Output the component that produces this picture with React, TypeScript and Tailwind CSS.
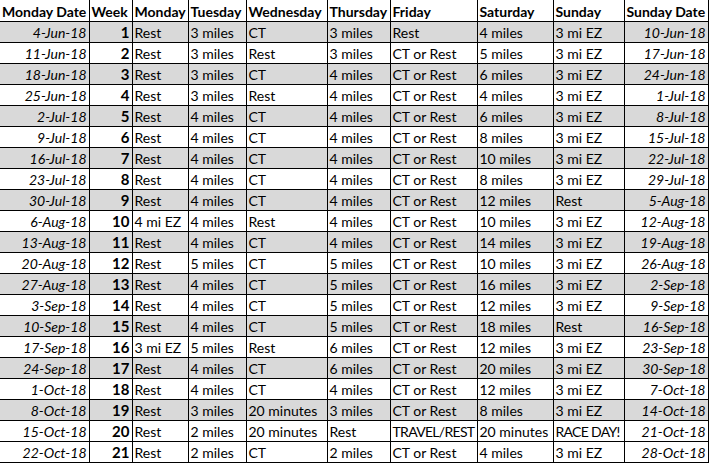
const rows: [string, number, string, string, string, string, string, string, string, string][] = [
  ['4-Jun-18', 1, 'Rest', '3 miles', 'CT', '3 miles', 'Rest', '4 miles', '3 mi EZ', '10-Jun-18'],
  ['11-Jun-18', 2, 'Rest', '3 miles', 'Rest', '3 miles', 'CT or Rest', '5 miles', '3 mi EZ', '17-Jun-18'],
  ['18-Jun-18', 3, 'Rest', '3 miles', 'CT', '4 miles', 'CT or Rest', '6 miles', '3 mi EZ', '24-Jun-18'],
  ['25-Jun-18', 4, 'Rest', '3 miles', 'Rest', '4 miles', 'CT or Rest', '4 miles', '3 mi EZ', '1-Jul-18'],
  ['2-Jul-18', 5, 'Rest', '4 miles', 'CT', '4 miles', 'CT or Rest', '6 miles', '3 mi EZ', '8-Jul-18'],
  ['9-Jul-18', 6, 'Rest', '4 miles', 'CT', '4 miles', 'CT or Rest', '8 miles', '3 mi EZ', '15-Jul-18'],
  ['16-Jul-18', 7, 'Rest', '4 miles', 'CT', '4 miles', 'CT or Rest', '10 miles', '3 mi EZ', '22-Jul-18'],
  ['23-Jul-18', 8, 'Rest', '4 miles', 'CT', '4 miles', 'CT or Rest', '8 miles', '3 mi EZ', '29-Jul-18'],
  ['30-Jul-18', 9, 'Rest', '4 miles', 'CT', '4 miles', 'CT or Rest', '12 miles', 'Rest', '5-Aug-18'],
  ['6-Aug-18', 10, '4 mi EZ', '4 miles', 'Rest', '4 miles', 'CT or Rest', '10 miles', '3 mi EZ', '12-Aug-18'],
  ['13-Aug-18', 11, 'Rest', '4 miles', 'CT', '4 miles', 'CT or Rest', '14 miles', '3 mi EZ', '19-Aug-18'],
  ['20-Aug-18', 12, 'Rest', '5 miles', 'CT', '5 miles', 'CT or Rest', '10 miles', '3 mi EZ', '26-Aug-18'],
  ['27-Aug-18', 13, 'Rest', '4 miles', 'CT', '5 miles', 'CT or Rest', '16 miles', '3 mi EZ', '2-Sep-18'],
  ['3-Sep-18', 14, 'Rest', '4 miles', 'CT', '5 miles', 'CT or Rest', '12 miles', '3 mi EZ', '9-Sep-18'],
  ['10-Sep-18', 15, 'Rest', '4 miles', 'CT', '5 miles', 'CT or Rest', '18 miles', 'Rest', '16-Sep-18'],
  ['17-Sep-18', 16, '3 mi EZ', '5 miles', 'Rest', '6 miles', 'CT or Rest', '12 miles', '3 mi EZ', '23-Sep-18'],
  ['24-Sep-18', 17, 'Rest', '4 miles', 'CT', '6 miles', 'CT or Rest', '20 miles', '3 mi EZ', '30-Sep-18'],
  ['1-Oct-18', 18, 'Rest', '4 miles', 'CT', '4 miles', 'CT or Rest', '12 miles', '3 mi EZ', '7-Oct-18'],
  ['8-Oct-18', 19, 'Rest', '3 miles', '20 minutes', '3 miles', 'CT or Rest', '8 miles', '3 mi EZ', '14-Oct-18'],
  ['15-Oct-18', 20, 'Rest', '2 miles', '20 minutes', 'Rest', 'TRAVEL/REST', '20 minutes', 'RACE DAY!', '21-Oct-18'],
  ['22-Oct-18', 21, 'Rest', '2 miles', 'CT', '2 miles', 'CT or Rest', '4 miles', '3 mi EZ', '28-Oct-18'],
];

const headers = ['Monday Date', 'Week', 'Monday', 'Tuesday', 'Wednesday', 'Thursday', 'Friday', 'Saturday', 'Sunday', 'Sunday Date'];
// column widths measured off the sheet, border included
const widths = [89, 43, 56, 58, 81, 63, 87, 76, 71, 84];

export default function App() {
  return (
    <div className="w-[709px] h-[463px] overflow-hidden bg-white text-black font-['Lato','Open_Sans',sans-serif] text-[14px] leading-none">
      <table className="table-fixed border-collapse w-[708px]">
        <colgroup>
          {widths.map((w, i) => (
            <col key={i} style={{ width: w }} />
          ))}
        </colgroup>
        <thead>
          <tr className="h-[21px]">
            {headers.map((h) => (
              <th key={h} className="border-r border-b border-black px-[2px] pt-[3px] align-bottom pb-[2px] text-left font-bold whitespace-nowrap overflow-hidden">
                {h}
              </th>
            ))}
          </tr>
        </thead>
        <tbody>
          {rows.map((r, i) => {
            const gray = i % 2 === 0 && i !== 20;
            return (
              <tr key={i} className={`h-[21px] ${gray ? 'bg-[#d9d9d9]' : 'bg-white'}`}>
                <td className="border-r border-b border-black px-[2px] pb-[2px] align-bottom text-right italic whitespace-nowrap">{r[0]}</td>
                <td className="border-r border-b border-black px-[2px] pb-[2px] align-bottom text-right font-bold text-[15px]">{r[1]}</td>
                {r.slice(2, 9).map((c, j) => (
                  <td
                    key={j}
                    className={`border-r border-b border-black px-[2px] pb-[2px] align-bottom whitespace-nowrap ${c === c.toUpperCase() && c.length > 6 ? 'tracking-[-0.7px]' : ''}`}
                  >
                    {c}
                  </td>
                ))}
                <td className="border-r border-b border-black px-[2px] pb-[2px] align-bottom text-right italic whitespace-nowrap">{r[9]}</td>
              </tr>
            );
          })}
        </tbody>
      </table>
    </div>
  );
}
